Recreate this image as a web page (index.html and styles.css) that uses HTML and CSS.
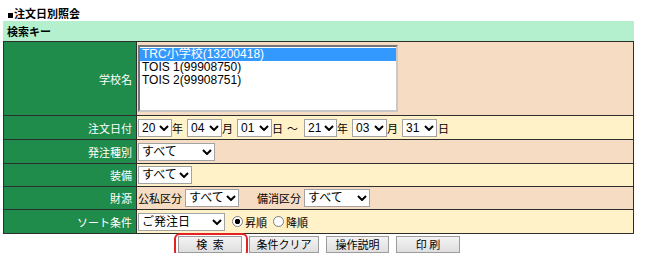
FILE: index.html
```html
<!DOCTYPE html>
<html lang="ja">
<head>
<meta charset="utf-8">
<title>注文日別照会</title>
<link rel="stylesheet" href="styles.css">
</head>
<body>
<div class="page">
  <div class="title"><span class="sq"></span>注文日別照会</div>
  <div class="band">検索キー</div>
  <table class="form">
    <colgroup><col class="c-label"><col></colgroup>
    <tr class="r-school">
      <th>学校名</th>
      <td>
        <div class="list" role="listbox" aria-label="学校名">
          <div class="opt selected" role="option" aria-selected="true">TRC小学校(13200418)</div>
          <div class="opt" role="option" aria-selected="false">TOIS 1(99908750)</div>
          <div class="opt" role="option" aria-selected="false">TOIS 2(99908751)</div>
        </div>
      </td>
    </tr>
    <tr class="r-yellow">
      <th>注文日付</th>
      <td><div class="line">
        <span class="sel w34"><select><option>20</option></select><svg class="chev" viewBox="0 0 10 6"><polyline points="1,1 5,5 9,1"/></svg></span><span class="u">年</span>
        <span class="sel w35"><select><option>04</option></select><svg class="chev" viewBox="0 0 10 6"><polyline points="1,1 5,5 9,1"/></svg></span><span class="u">月</span>
        <span class="sel w35"><select><option>01</option></select><svg class="chev" viewBox="0 0 10 6"><polyline points="1,1 5,5 9,1"/></svg></span><span class="u">日</span><span class="tilde">～</span>
        <span class="sel w33"><select><option>21</option></select><svg class="chev" viewBox="0 0 10 6"><polyline points="1,1 5,5 9,1"/></svg></span><span class="u">年</span>
        <span class="sel w35"><select><option>03</option></select><svg class="chev" viewBox="0 0 10 6"><polyline points="1,1 5,5 9,1"/></svg></span><span class="u">月</span>
        <span class="sel w35"><select><option>31</option></select><svg class="chev" viewBox="0 0 10 6"><polyline points="1,1 5,5 9,1"/></svg></span><span class="u last">日</span>
      </div></td>
    </tr>
    <tr class="r-peach">
      <th>発注種別</th>
      <td><div class="line">
        <span class="sel w77"><select><option>すべて</option></select><svg class="chev" viewBox="0 0 10 6"><polyline points="1,1 5,5 9,1"/></svg></span>
      </div></td>
    </tr>
    <tr class="r-yellow r-short">
      <th>装備</th>
      <td><div class="line">
        <span class="sel w54"><select><option>すべて</option></select><svg class="chev" viewBox="0 0 10 6"><polyline points="1,1 5,5 9,1"/></svg></span>
      </div></td>
    </tr>
    <tr class="r-peach r-short">
      <th>財源</th>
      <td><div class="line">
        <span class="lbl">公私区分</span>
        <span class="sel w54"><select><option>すべて</option></select><svg class="chev" viewBox="0 0 10 6"><polyline points="1,1 5,5 9,1"/></svg></span>
        <span class="lbl lbl2">備消区分</span>
        <span class="sel w66"><select><option>すべて</option></select><svg class="chev" viewBox="0 0 10 6"><polyline points="1,1 5,5 9,1"/></svg></span>
      </div></td>
    </tr>
    <tr class="r-yellow">
      <th>ソート条件</th>
      <td><div class="line">
        <span class="sel w87"><select><option>ご発注日</option></select><svg class="chev" viewBox="0 0 10 6"><polyline points="1,1 5,5 9,1"/></svg></span>
        <label class="radio first"><input type="radio" name="order" checked>昇順</label>
        <label class="radio"><input type="radio" name="order">降順</label>
      </div></td>
    </tr>
  </table>
  <div class="buttons">
    <span class="mark"><button type="button" class="btn">検&ensp;索</button></span>
    <button type="button" class="btn b-clear">条件クリア</button>
    <button type="button" class="btn b-help">操作説明</button>
    <button type="button" class="btn">印 刷</button>
  </div>
</div>
</body>
</html>
```

FILE: styles.css
```css
html, body {
  margin: 0;
  padding: 0;
  background: #ffffff;
}

body {
  font-family: "Liberation Sans", "Noto Sans CJK JP", sans-serif;
  font-size: 12px;
  color: #000;
}

.page {
  width: 631px;
  padding-left: 3px;
}

.title {
  height: 21px;
  box-sizing: border-box;
  padding: 6px 0 0 5px;
  font-family: "Noto Sans CJK JP", sans-serif;
  font-size: 11px;
  font-weight: bold;
  line-height: 13px;
  display: flex;
  align-items: center;
  align-content: flex-start;
}

.sq {
  display: inline-block;
  width: 5px;
  height: 5px;
  background: #000;
  margin: 3px 1px 0 0;
}

.band {
  height: 20px;
  background: #b4f0cd;
  font-family: "Noto Sans CJK JP", sans-serif;
  font-size: 11px;
  font-weight: bold;
  line-height: 20px;
  padding-left: 4px;
}

.form {
  width: 631px;
  border-collapse: collapse;
  table-layout: fixed;
}

.c-label {
  width: 133px;
}

.form th,
.form td {
  border: 1px solid #2e2e2e;
  padding: 0;
  vertical-align: middle;
}

.form th {
  background: #1f8c4b;
  color: #fff;
  font-family: "Noto Sans CJK JP", sans-serif;
  font-size: 11px;
  font-weight: normal;
  text-align: right;
  padding-right: 4px;
  height: 23px;
}

.form td {
  padding-left: 1px;
  font-family: "Noto Sans CJK JP", sans-serif;
  font-size: 11px;
}

.r-school td { background: #f5dcc3; height: 73px; }
.r-school th { height: 73px; }
.r-peach td { background: #f5dcc3; }
.r-yellow td { background: #fff2c8; }
.r-short th, .r-short td { height: 22px; }

.list {
  width: 260px;
  height: 67px;
  box-sizing: border-box;
  border: 2px inset #c8c8c8;
  padding: 1px 0 0 0;
  font-family: "Liberation Sans", "Noto Sans CJK JP", sans-serif;
  font-size: 12px;
  background: #fff;
  overflow: hidden;
}

.opt {
  height: 13px;
  line-height: 13px;
  padding: 0 2px;
  white-space: nowrap;
  color: #000;
}

.opt.selected {
  background: #3399ff;
  color: #fff;
}

.line {
  display: flex;
  align-items: center;
}

.sel {
  display: inline-flex;
  align-items: center;
  height: 18px;
}

.sel select {
  appearance: none;
  -webkit-appearance: none;
  height: 18px;
  box-sizing: border-box;
  width: 100%;
  margin: 0;
  border: 1px solid #a3a3a3;
  border-radius: 0;
  background: #fff;
  padding: 0 0 0 3px;
  font-family: "Liberation Sans", "Noto Sans CJK JP", sans-serif;
  font-size: 12px;
  color: #000;
  outline: none;
}

.chev {
  width: 10px;
  height: 6px;
  flex: none;
  margin-left: -13px;
  margin-right: 3px;
  pointer-events: none;
  fill: none;
  stroke: #000;
  stroke-width: 2;
}

.w33 { width: 33px; }
.w34 { width: 34px; }
.w35 { width: 35px; }
.w54 { width: 54px; }
.w66 { width: 66px; }
.w77 { width: 77px; }
.w87 { width: 87px; }

.u {
  margin: 0 4px 0 0;
  font-size: 11px;
}

.u.last { margin-right: 0; margin-left: 1px; }

.tilde {
  margin: 0 6px 0 0;
}

.lbl {
  margin-right: 3px;
}

.lbl2 {
  margin-left: 18px;
  margin-right: 3px;
}

.radio {
  display: inline-flex;
  align-items: center;
  margin-left: 6px;
}

.radio.first { margin-left: 7px; }

.radio input {
  appearance: none;
  -webkit-appearance: none;
  width: 11px;
  height: 11px;
  margin: 0 2px 0 0;
  border: 1px solid #7d7d7d;
  border-radius: 50%;
  background: #fff;
  box-sizing: border-box;
}

.radio input:checked {
  background: radial-gradient(circle, #000 0, #000 2.4px, #fff 3px);
}

.buttons {
  display: flex;
  justify-content: center;
  align-items: center;
  gap: 7px;
  margin-top: 2px;
  padding-left: 1px;
}

.mark {
  position: relative;
  display: inline-flex;
}

.mark::after {
  content: "";
  position: absolute;
  left: -4px;
  right: -6px;
  top: -3px;
  bottom: -4px;
  border: 2px solid #e32222;
  border-radius: 6px;
}

.btn {
  height: 17px;
  width: 64px;
  box-sizing: border-box;
  margin: 0;
  padding: 0;
  border: 1px solid #9c9c9c;
  border-radius: 0;
  background: linear-gradient(#f4f4f4, #dedede);
  font-family: "Noto Sans CJK JP", sans-serif;
  font-size: 11px;
  line-height: 15px;
  color: #000;
}

.b-clear { width: 70px; }
.b-help { width: 63px; }
```
